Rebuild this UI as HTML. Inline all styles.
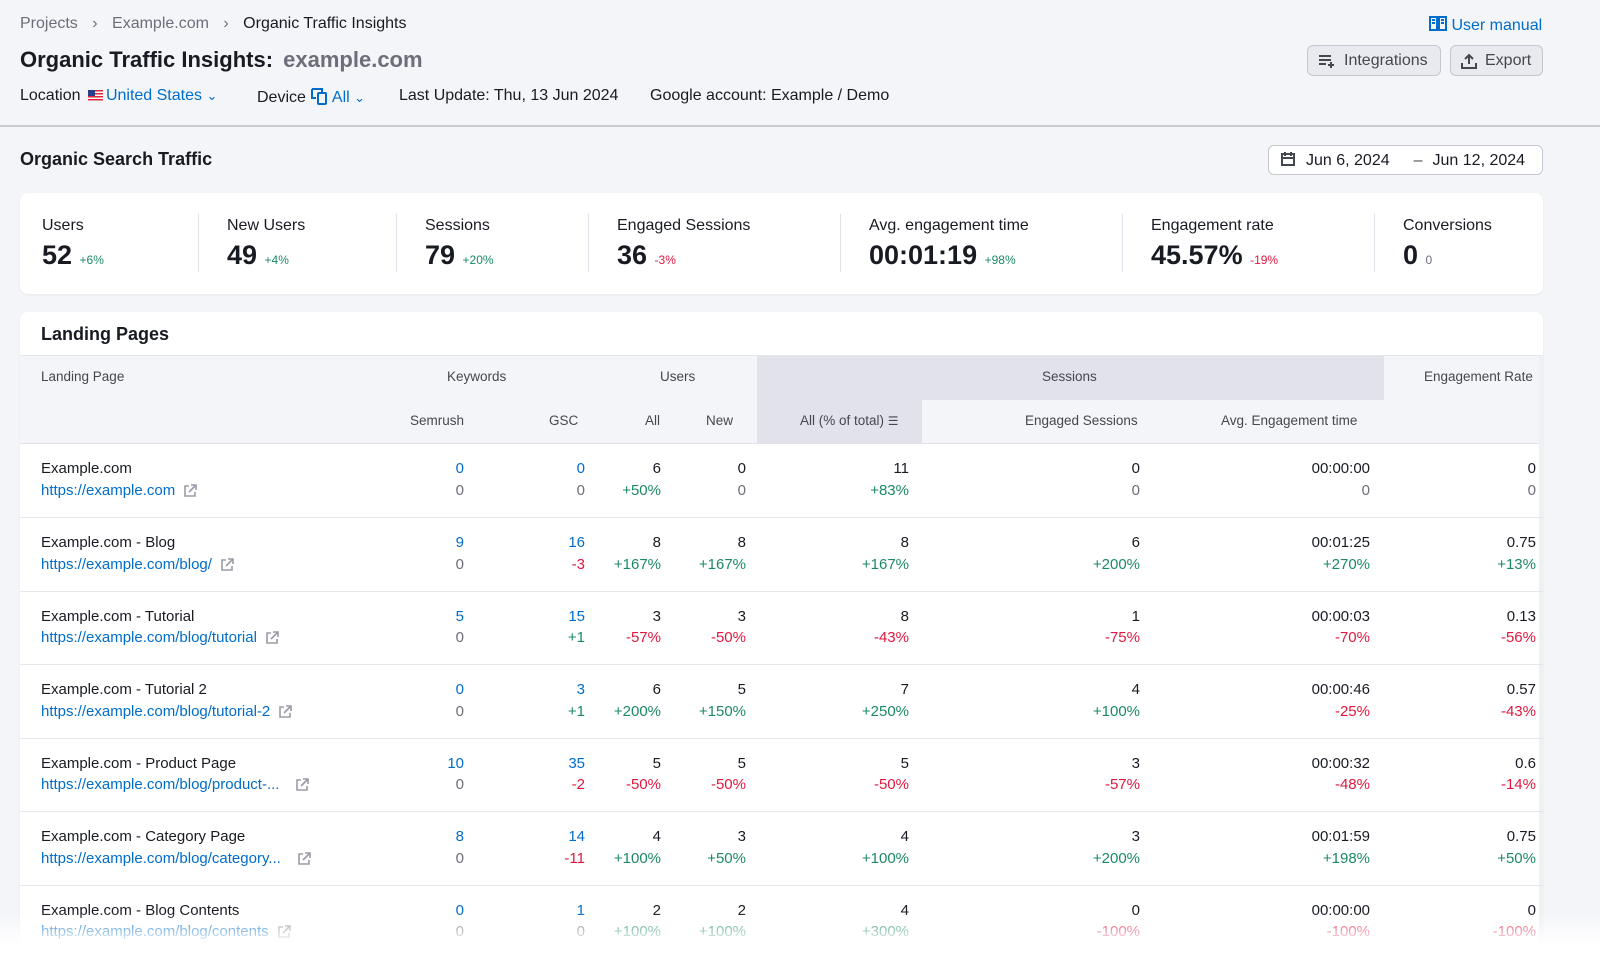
<!DOCTYPE html>
<html><head><meta charset="utf-8"><style>
*{box-sizing:border-box;margin:0;padding:0}
html{width:1600px;height:966px;overflow:hidden}
body{width:1600px;height:966px;overflow:hidden;background:#f4f5f9;font-family:"Liberation Sans",Arial,sans-serif;color:#191b23;position:relative}
.a{position:absolute;white-space:nowrap}
.g{color:#1b8a63}.r{color:#e0183f}.b{color:#006dca}.m{color:#6c6e79}
.btn{position:absolute;top:45px;height:31px;border:1px solid #c4c7cf;background:#e9eaf0;border-radius:6px;font-size:16px;color:#45474f;display:flex;align-items:center;padding:0 10px;gap:8px}
.card{position:absolute;left:20px;width:1523px;background:#fff;border-radius:8px;box-shadow:0 1px 2px rgba(0,0,0,.06)}
.lab{font-size:16px;color:#191b23}
.num{font-size:27px;font-weight:bold;margin-top:5px}
.num span{font-size:12px;font-weight:normal}
.div{position:absolute;top:21px;width:1px;height:58px;background:#e0e1e9}
table{position:absolute;left:0;border-collapse:collapse;table-layout:fixed;width:1523px;font-size:15px}
td{vertical-align:top;text-align:right;line-height:21.5px;color:#191b23}
tr.d td{height:73.5px;padding-top:14px;border-bottom:1px solid #e6e7ec}
td.l{text-align:left;padding-left:21px}
.ext{display:inline-block;vertical-align:-3px;margin-left:8px}
</style></head><body>
<div class="a" style="left:20px;top:15px;font-size:16px;color:#6c6e79">Projects <span style="margin:0 10px">›</span> Example.com <span style="margin:0 10px">›</span> <span style="color:#191b23">Organic Traffic Insights</span></div>
<div class="a" style="left:20px;top:47px;font-size:22px;font-weight:bold">Organic Traffic Insights: <span style="color:#6c6e79;margin-left:4px">example.com</span></div>
<div class="a" style="left:20px;top:87px;font-size:16px">Location <span style="display:inline-block;width:15px;height:11px;background:repeating-linear-gradient(#e0243c 0 1.5px,#fff 1.5px 3px);position:relative;vertical-align:-1px;margin:0 3px"><span style="position:absolute;left:0;top:0;width:7px;height:6px;background:#2a3f8a"></span></span><span class="b">United States</span> <span class="b" style="font-size:13px">⌄</span></div>
<div class="a" style="left:257px;top:87px;font-size:16px">Device <svg width="18" height="18" viewBox="0 0 18 18" style="vertical-align:-3px"><path d="M2 2h10v3M2 2v9h4" fill="none" stroke="#006dca" stroke-width="2"/><rect x="8" y="6" width="8" height="11" rx="1" fill="none" stroke="#006dca" stroke-width="2"/></svg> <span class="b">All</span> <span class="b" style="font-size:13px">⌄</span></div>
<div class="a" style="left:399px;top:87px;font-size:16px">Last Update: Thu, 13 Jun 2024</div>
<div class="a" style="left:650px;top:87px;font-size:16px">Google account: Example / Demo</div>
<div class="a b" style="left:1429px;top:15px;font-size:16px"><svg width="18" height="18" viewBox="0 0 18 18" style="vertical-align:-3px"><path d="M1 2h7v13H1zM10 2h7v13h-7zM3 5h3M3 8h3M12 5h3M12 8h3" fill="none" stroke="#006dca" stroke-width="2"/></svg> User manual</div>
<div class="btn" style="left:1307px;width:134px"><svg width="18" height="14" viewBox="0 0 18 14"><path d="M1 2h12M1 6h12M1 10h7M13 8v6M10 11h6" stroke="#45474f" stroke-width="2" fill="none"/></svg>Integrations</div>
<div class="btn" style="left:1450px;width:93px"><svg width="16" height="16" viewBox="0 0 16 16"><path d="M8 11V2M4 6l4-4 4 4M1 10v5h14v-5" stroke="#45474f" stroke-width="2" fill="none"/></svg>Export</div>
<div class="a" style="left:0;top:125px;width:1600px;height:2px;background:#c9cbd2"></div>
<div class="a" style="left:20px;top:149px;font-size:18px;font-weight:bold">Organic Search Traffic</div>
<div class="a" style="left:1268px;top:145px;width:275px;height:30px;background:#fff;border:1px solid #c4c7cf;border-radius:6px;font-size:16px;padding:5px 0 0 11px"><svg width="16" height="16" viewBox="0 0 16 16" style="vertical-align:-2px"><path d="M2 3h12v11H2zM2 7h12M5 1v4M11 1v4" stroke="#45474f" stroke-width="2" fill="none"/></svg><span style="margin-left:10px">Jun 6, 2024</span><span style="margin-left:24px;color:#45474f">–</span><span style="margin-left:10px">Jun 12, 2024</span></div>

<div class="card" style="top:193px;height:101px">
<div class="div" style="left:178px"></div><div class="div" style="left:376px"></div><div class="div" style="left:568px"></div><div class="div" style="left:820px"></div><div class="div" style="left:1102px"></div><div class="div" style="left:1354px"></div>
<div class="a" style="left:22px;top:24px"><div class="lab">Users</div><div class="num">52 <span class="g">+6%</span></div></div>
<div class="a" style="left:207px;top:24px"><div class="lab">New Users</div><div class="num">49 <span class="g">+4%</span></div></div>
<div class="a" style="left:405px;top:24px"><div class="lab">Sessions</div><div class="num">79 <span class="g">+20%</span></div></div>
<div class="a" style="left:597px;top:24px"><div class="lab">Engaged Sessions</div><div class="num">36 <span class="r">-3%</span></div></div>
<div class="a" style="left:849px;top:24px"><div class="lab">Avg. engagement time</div><div class="num">00:01:19 <span class="g">+98%</span></div></div>
<div class="a" style="left:1131px;top:24px"><div class="lab">Engagement rate</div><div class="num">45.57% <span class="r">-19%</span></div></div>
<div class="a" style="left:1383px;top:24px"><div class="lab">Conversions</div><div class="num">0 <span class="m">0</span></div></div>
</div>

<div class="card" style="top:312px;height:654px;overflow:hidden;border-radius:8px 8px 0 0">
<div class="a" style="left:21px;top:12px;font-size:18px;font-weight:bold">Landing Pages</div>
<div class="a" style="left:0;top:43px;width:1523px;height:89px;background:#f4f5f9;border-top:1px solid #e6e7ec;border-bottom:1px solid #e0e1e9"></div>
<div class="a" style="left:737px;top:44px;width:627px;height:44px;background:#e1e2ea"></div>
<div class="a" style="left:737px;top:88px;width:165px;height:44px;background:#e1e2ea"></div>
<div class="a" style="left:1519px;top:44px;width:4px;height:600px;background:#eef0f4"></div>
<div class="a" style="left:21px;top:57px;font-size:13.5px;color:#45474f">Landing Page</div>
<div class="a" style="left:427px;top:57px;font-size:13.5px;color:#45474f">Keywords</div>
<div class="a" style="left:640px;top:57px;font-size:13.5px;color:#45474f">Users</div>
<div class="a" style="left:1022px;top:57px;font-size:13.5px;color:#45474f">Sessions</div>
<div class="a" style="left:1404px;top:57px;font-size:13.5px;color:#45474f">Engagement Rate</div>
<div class="a" style="left:390px;top:101px;font-size:13.5px;color:#45474f">Semrush</div>
<div class="a" style="left:529px;top:101px;font-size:13.5px;color:#45474f">GSC</div>
<div class="a" style="left:625px;top:101px;font-size:13.5px;color:#45474f">All</div>
<div class="a" style="left:686px;top:101px;font-size:13.5px;color:#45474f">New</div>
<div class="a" style="left:780px;top:101px;font-size:13.5px;color:#45474f">All (% of total) <span style="font-size:12px">☰</span></div>
<div class="a" style="left:1005px;top:101px;font-size:13.5px;color:#45474f">Engaged Sessions</div>
<div class="a" style="left:1201px;top:101px;font-size:13.5px;color:#45474f">Avg. Engagement time</div>
<table style="top:132px">
<colgroup><col style="width:380px"><col style="width:75px"><col style="width:121px"><col style="width:76px"><col style="width:85px"><col style="width:165px"><col style="width:230px"><col style="width:230px"><col style="width:161px"></colgroup>
<tr class="d"><td class="l">Example.com<br><span class="b">https://example.com</span><svg class="ext" width="14" height="14" viewBox="0 0 14 14"><path d="M6 2H2v10h10V8M8 1h5v5M13 1 6 8" stroke="#9a9ca5" stroke-width="1.6" fill="none"/></svg></td><td style="padding-right:11px"><span class="b">0</span><br><span class="m">0</span></td><td style="padding-right:11px"><span class="b">0</span><br><span class="m">0</span></td><td style="padding-right:11px">6<br><span class="g">+50%</span></td><td style="padding-right:11px">0<br><span class="m">0</span></td><td style="padding-right:13px">11<br><span class="g">+83%</span></td><td style="padding-right:12px">0<br><span class="m">0</span></td><td style="padding-right:12px">00:00:00<br><span class="m">0</span></td><td style="padding-right:7px">0<br><span class="m">0</span></td></tr>
<tr class="d"><td class="l">Example.com - Blog<br><span class="b">https://example.com/blog/</span><svg class="ext" width="14" height="14" viewBox="0 0 14 14"><path d="M6 2H2v10h10V8M8 1h5v5M13 1 6 8" stroke="#9a9ca5" stroke-width="1.6" fill="none"/></svg></td><td style="padding-right:11px"><span class="b">9</span><br><span class="m">0</span></td><td style="padding-right:11px"><span class="b">16</span><br><span class="r">-3</span></td><td style="padding-right:11px">8<br><span class="g">+167%</span></td><td style="padding-right:11px">8<br><span class="g">+167%</span></td><td style="padding-right:13px">8<br><span class="g">+167%</span></td><td style="padding-right:12px">6<br><span class="g">+200%</span></td><td style="padding-right:12px">00:01:25<br><span class="g">+270%</span></td><td style="padding-right:7px">0.75<br><span class="g">+13%</span></td></tr>
<tr class="d"><td class="l">Example.com - Tutorial<br><span class="b">https://example.com/blog/tutorial</span><svg class="ext" width="14" height="14" viewBox="0 0 14 14"><path d="M6 2H2v10h10V8M8 1h5v5M13 1 6 8" stroke="#9a9ca5" stroke-width="1.6" fill="none"/></svg></td><td style="padding-right:11px"><span class="b">5</span><br><span class="m">0</span></td><td style="padding-right:11px"><span class="b">15</span><br><span class="g">+1</span></td><td style="padding-right:11px">3<br><span class="r">-57%</span></td><td style="padding-right:11px">3<br><span class="r">-50%</span></td><td style="padding-right:13px">8<br><span class="r">-43%</span></td><td style="padding-right:12px">1<br><span class="r">-75%</span></td><td style="padding-right:12px">00:00:03<br><span class="r">-70%</span></td><td style="padding-right:7px">0.13<br><span class="r">-56%</span></td></tr>
<tr class="d"><td class="l">Example.com - Tutorial 2<br><span class="b">https://example.com/blog/tutorial-2</span><svg class="ext" width="14" height="14" viewBox="0 0 14 14"><path d="M6 2H2v10h10V8M8 1h5v5M13 1 6 8" stroke="#9a9ca5" stroke-width="1.6" fill="none"/></svg></td><td style="padding-right:11px"><span class="b">0</span><br><span class="m">0</span></td><td style="padding-right:11px"><span class="b">3</span><br><span class="g">+1</span></td><td style="padding-right:11px">6<br><span class="g">+200%</span></td><td style="padding-right:11px">5<br><span class="g">+150%</span></td><td style="padding-right:13px">7<br><span class="g">+250%</span></td><td style="padding-right:12px">4<br><span class="g">+100%</span></td><td style="padding-right:12px">00:00:46<br><span class="r">-25%</span></td><td style="padding-right:7px">0.57<br><span class="r">-43%</span></td></tr>
<tr class="d"><td class="l">Example.com - Product Page<br><span class="b">https://example.com/blog/product-...</span><svg class="ext" style="margin-left:16px" width="14" height="14" viewBox="0 0 14 14"><path d="M6 2H2v10h10V8M8 1h5v5M13 1 6 8" stroke="#9a9ca5" stroke-width="1.6" fill="none"/></svg></td><td style="padding-right:11px"><span class="b">10</span><br><span class="m">0</span></td><td style="padding-right:11px"><span class="b">35</span><br><span class="r">-2</span></td><td style="padding-right:11px">5<br><span class="r">-50%</span></td><td style="padding-right:11px">5<br><span class="r">-50%</span></td><td style="padding-right:13px">5<br><span class="r">-50%</span></td><td style="padding-right:12px">3<br><span class="r">-57%</span></td><td style="padding-right:12px">00:00:32<br><span class="r">-48%</span></td><td style="padding-right:7px">0.6<br><span class="r">-14%</span></td></tr>
<tr class="d"><td class="l">Example.com - Category Page<br><span class="b">https://example.com/blog/category...</span><svg class="ext" style="margin-left:16px" width="14" height="14" viewBox="0 0 14 14"><path d="M6 2H2v10h10V8M8 1h5v5M13 1 6 8" stroke="#9a9ca5" stroke-width="1.6" fill="none"/></svg></td><td style="padding-right:11px"><span class="b">8</span><br><span class="m">0</span></td><td style="padding-right:11px"><span class="b">14</span><br><span class="r">-11</span></td><td style="padding-right:11px">4<br><span class="g">+100%</span></td><td style="padding-right:11px">3<br><span class="g">+50%</span></td><td style="padding-right:13px">4<br><span class="g">+100%</span></td><td style="padding-right:12px">3<br><span class="g">+200%</span></td><td style="padding-right:12px">00:01:59<br><span class="g">+198%</span></td><td style="padding-right:7px">0.75<br><span class="g">+50%</span></td></tr>
<tr class="d"><td class="l">Example.com - Blog Contents<br><span class="b">https://example.com/blog/contents</span><svg class="ext" width="14" height="14" viewBox="0 0 14 14"><path d="M6 2H2v10h10V8M8 1h5v5M13 1 6 8" stroke="#9a9ca5" stroke-width="1.6" fill="none"/></svg></td><td style="padding-right:11px"><span class="b">0</span><br><span class="m">0</span></td><td style="padding-right:11px"><span class="b">1</span><br><span class="m">0</span></td><td style="padding-right:11px">2<br><span class="g">+100%</span></td><td style="padding-right:11px">2<br><span class="g">+100%</span></td><td style="padding-right:13px">4<br><span class="g">+300%</span></td><td style="padding-right:12px">0<br><span class="r">-100%</span></td><td style="padding-right:12px">00:00:00<br><span class="r">-100%</span></td><td style="padding-right:7px">0<br><span class="r">-100%</span></td></tr>
</table>
</div>
<div class="a" style="left:0;top:912px;width:1600px;height:54px;background:linear-gradient(rgba(255,255,255,0),rgba(255,255,255,.75) 45%,#fff 65%)"></div>
</body></html>
